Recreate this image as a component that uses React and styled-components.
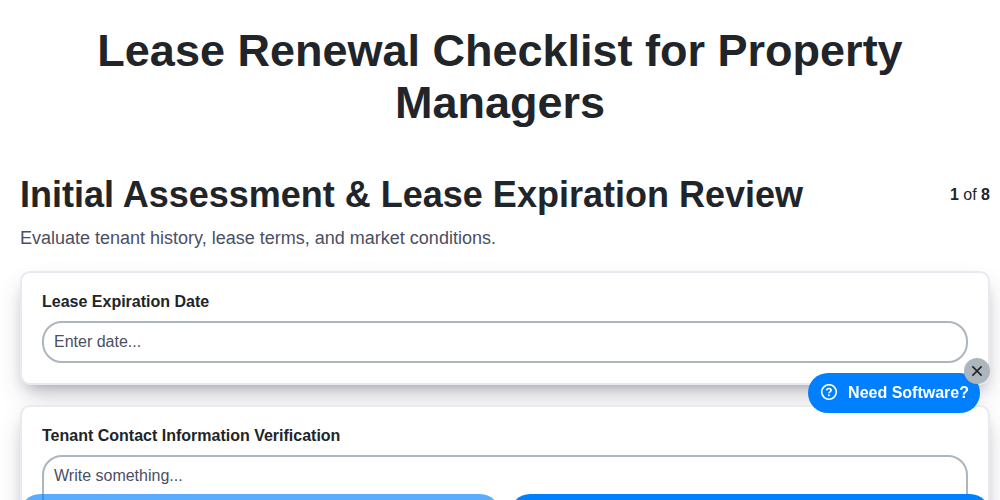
import React from 'react';
import styled, { createGlobalStyle, css } from 'styled-components';

const GlobalStyle = createGlobalStyle`
  *, *::before, *::after {
    box-sizing: border-box;
  }
  body {
    margin: 0;
    background: #fff;
    color: #212529;
    font-family: "Liberation Sans", Arial, sans-serif;
    font-size: 16px;
    line-height: 20px;
    overflow-x: hidden;
  }
`;

const Page = styled.main`
  padding: 25px 10px 60px 20px;
`;

const Title = styled.h1`
  margin: 0 auto 44px;
  padding: 0 70px 0 60px;
  font-size: 45px;
  line-height: 52px;
  text-align: center;
`;

const SectionHeader = styled.header`
  display: flex;
  align-items: center;
  justify-content: space-between;
  gap: 20px;
`;

const SectionTitle = styled.h2`
  margin: 0;
  font-size: 36px;
  line-height: 44px;
`;

const Counter = styled.span`
  flex: none;
`;

const Description = styled.p`
  margin: 10px 0 22px;
  color: #4a4f63;
  font-size: 18px;
  line-height: 22px;
`;

const Fields = styled.form`
  display: grid;
  gap: 20px;
`;

const Card = styled.div`
  display: flex;
  flex-direction: column;
  gap: 9px;
  padding: 19px 20px 20px;
  background: #fff;
  border: 2px solid #e9e9f0;
  border-radius: 10px;
  box-shadow: 0 13px 27px -5px rgba(50, 50, 93, 0.25), 0 8px 16px -8px rgba(0, 0, 0, 0.3);
`;

const Label = styled.label`
  font-weight: bold;
`;

const control = css`
  display: block;
  width: 100%;
  margin: 0;
  padding: 9px 10px;
  background: #fff;
  border: 2px solid #adb5bd;
  border-radius: 20px;
  color: inherit;
  font: inherit;
  line-height: 20px;
  outline: none;

  &::placeholder {
    color: #4a4f63;
    opacity: 1;
  }
`;

const TextInput = styled.input`
  ${control};
  height: 42px;
`;

const TextArea = styled.textarea`
  ${control};
  height: 100px;
  resize: none;
`;

const Pager = styled.nav`
  position: fixed;
  right: 10px;
  bottom: -36px;
  left: 20px;
  display: grid;
  grid-template-columns: 1fr 1fr;
  gap: 10px;
`;

const PagerButton = styled.button`
  height: 42px;
  border: 0;
  border-radius: 20px;
  background: #0080ff;
  opacity: ${({ disabled }) => (disabled ? 0.65 : 1)};
`;

const Help = styled.aside`
  position: fixed;
  right: 20px;
  bottom: 87px;
`;

const HelpButton = styled.button`
  display: flex;
  align-items: center;
  gap: 10px;
  height: 40px;
  padding: 0 11px 0 12px;
  border: 0;
  border-radius: 20px;
  background: #0080ff;
  color: #fff;
  font: inherit;
  font-weight: bold;
  white-space: nowrap;
`;

const CloseButton = styled.button`
  position: absolute;
  top: -15px;
  right: -10px;
  display: flex;
  align-items: center;
  justify-content: center;
  width: 26px;
  height: 26px;
  padding: 0;
  border: 0;
  border-radius: 50%;
  background: #adb5bd;
  color: #212529;
`;

const QuestionIcon = () => (
  <svg width="18" height="18" viewBox="0 0 18 18" fill="none" stroke="currentColor" aria-hidden="true">
    <circle cx="9" cy="8" r="7.3" strokeWidth="1.6" />
    <path d="M6.6 6.4C6.7 5.1 7.6 4.5 8.9 4.5c1.3 0 2.2.7 2.2 1.8 0 1.5-2.2 1.5-2.2 3" strokeWidth="1.6" />
    <circle cx="8.9" cy="11.3" r="1" fill="currentColor" stroke="none" />
  </svg>
);

const CloseIcon = () => (
  <svg width="12" height="12" viewBox="0 0 12 12" fill="none" stroke="currentColor" aria-hidden="true">
    <path d="M1.4 1.4l9.2 9.2M10.6 1.4l-9.2 9.2" strokeWidth="1.6" />
  </svg>
);

const App = () => (
  <>
    <GlobalStyle />
    <Page>
      <Title>Lease Renewal Checklist for Property Managers</Title>
      <SectionHeader>
        <SectionTitle>Initial Assessment &amp; Lease Expiration Review</SectionTitle>
        <Counter>
          <b>1</b> of <b>8</b>
        </Counter>
      </SectionHeader>
      <Description>Evaluate tenant history, lease terms, and market conditions.</Description>
      <Fields>
        <Card>
          <Label htmlFor="expiration">Lease Expiration Date</Label>
          <TextInput id="expiration" type="text" placeholder="Enter date..." />
        </Card>
        <Card>
          <Label htmlFor="contact">Tenant Contact Information Verification</Label>
          <TextArea id="contact" placeholder="Write something..." />
        </Card>
      </Fields>
    </Page>
    <Pager>
      <PagerButton type="button" aria-label="Previous" disabled />
      <PagerButton type="button" aria-label="Next" />
    </Pager>
    <Help>
      <HelpButton type="button">
        <QuestionIcon />
        Need Software?
      </HelpButton>
      <CloseButton type="button" aria-label="Close">
        <CloseIcon />
      </CloseButton>
    </Help>
  </>
);

export default App;
